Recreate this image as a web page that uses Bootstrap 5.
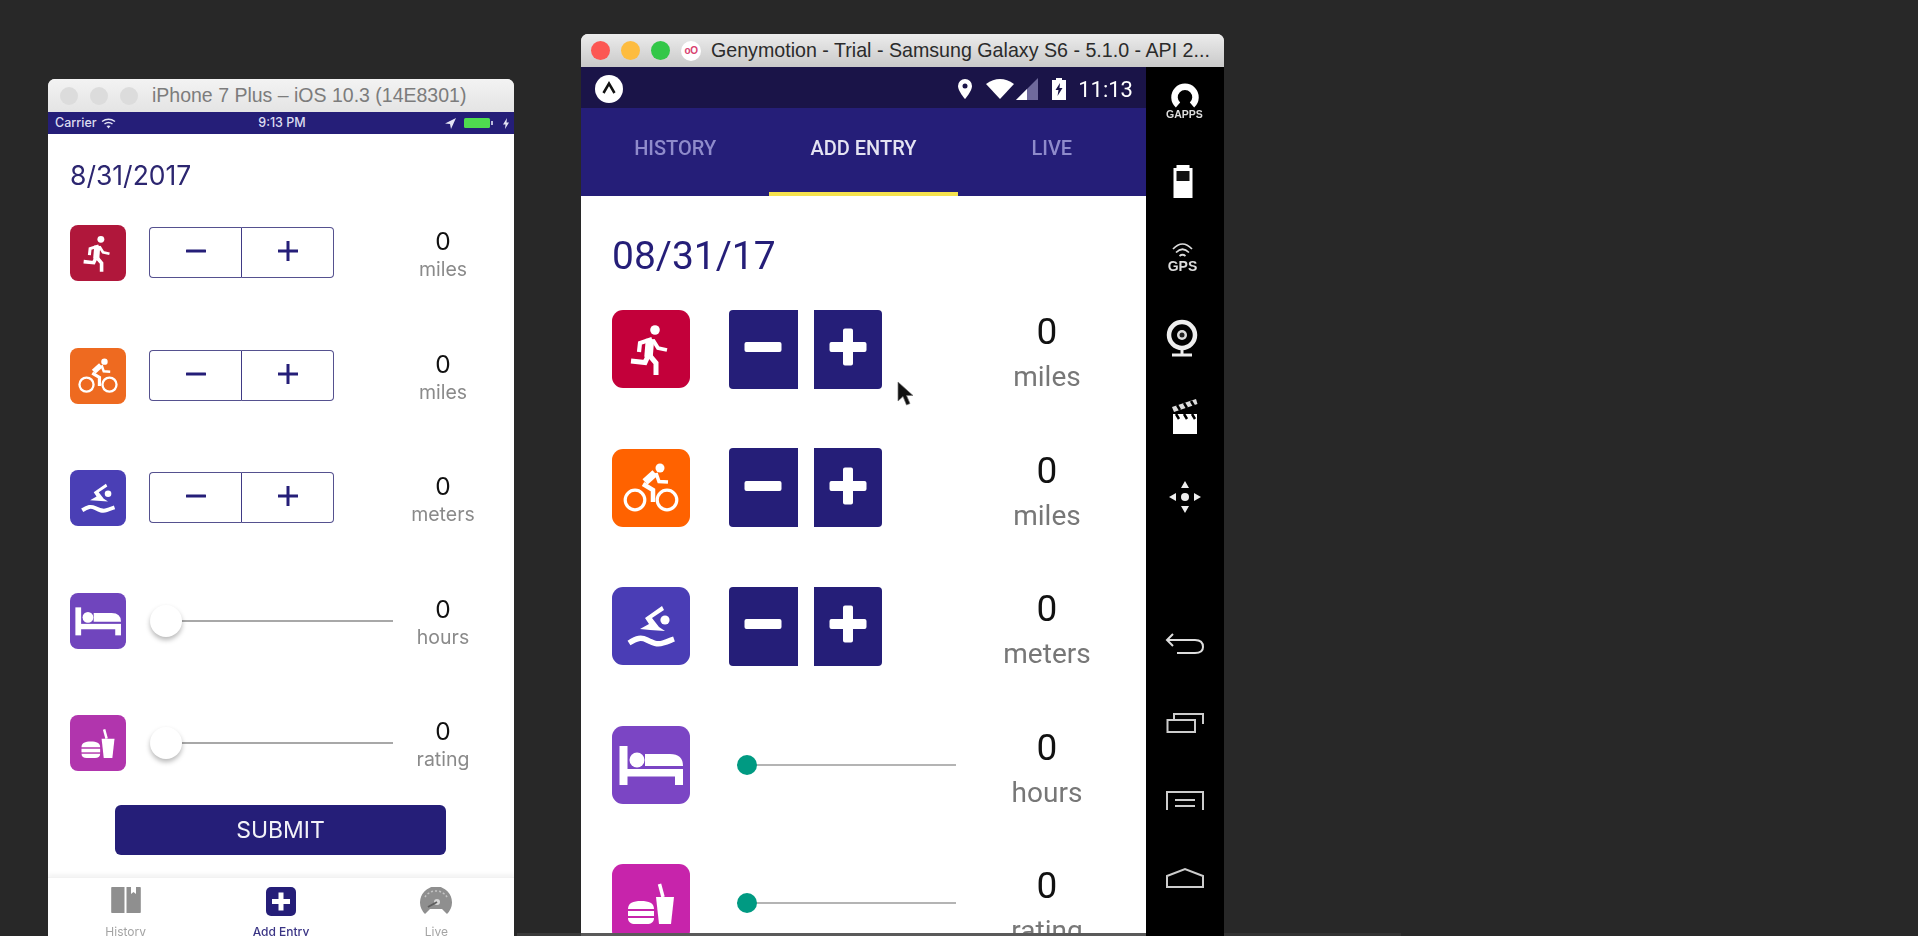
<!DOCTYPE html>
<html lang="en">
<head>
<meta charset="utf-8">
<title>iOS and Android simulators</title>
<link rel="stylesheet" href="https://cdn.jsdelivr.net/npm/bootstrap@5.3.0/dist/css/bootstrap.min.css">
<style>
html,body{height:936px;overflow:hidden}
body{background:#282828;position:relative}
.sim-win{position:absolute;overflow:hidden;border-radius:7px 7px 0 0;bottom:0;display:flex;flex-direction:column;filter:blur(.45px)}
.win-ios{left:48px;top:79px;width:466px;background:#fff;font-family:Inter,"Liberation Sans",sans-serif}
.win-droid{left:581px;top:34px;width:643px;background:#fff;font-family:Roboto,"Liberation Sans",sans-serif}
.title-bar{flex:none;display:flex;align-items:center}
.win-ios .title-bar{height:33px;background:linear-gradient(#f3f3f3,#e4e4e4);padding-left:12px}
.win-droid .title-bar{height:33px;background:linear-gradient(#ececec,#c9c9c9);padding-left:10px}
.light{width:19px;height:19px;border-radius:50%;flex:none;margin-right:11px}
.light-off{background:#dcdcdc;width:18px;height:18px;margin-right:12px}
.light-r{background:#fc5753}.light-y{background:#fdbc40}.light-g{background:#33c748}
.geny-logo{width:20px;height:20px;border-radius:50%;background:#fff;color:#d8416f;font:700 10px/20px "Liberation Sans",sans-serif;text-align:center;flex:none;margin-right:10px;letter-spacing:-.5px}
.win-title{white-space:nowrap}
.win-ios .win-title{font:19.5px "Liberation Sans",sans-serif;color:#7c7c7c;margin-left:2px}
.win-droid .win-title{font:19.65px "Liberation Sans",sans-serif;color:#2b2b2b}
.ios-status{flex:none;height:22px;background:#251e78;color:#dcdcf0;font-size:12.5px;font-weight:500;display:grid;grid-template-columns:1fr auto 1fr;align-items:center;padding:0 5px 0 7px}
.ios-content{flex:1;padding:22px 0 0 22px;min-height:0}
.ios-date{font-size:26.5px;line-height:38px;color:#2c2670;margin-bottom:31px}
.ios-row{display:flex;height:56px;margin-bottom:66.5px}
.ios-row:last-of-type{margin-bottom:34px}
.tile{flex:none;display:block}
.tile svg{display:block;width:100%;height:100%}
.ios-row .tile{width:56px;height:56px;border-radius:8px}
.droid-row .tile{width:78px;height:78px;border-radius:11px}
.c-run-i{background:#b0173b}.c-bike-i{background:#ee6a20}.c-swim-i{background:#4a3fb5}.c-bed-i{background:#7045bd}.c-food-i{background:#b135ad}
.c-run-a{background:#c3003a}.c-bike-a{background:#ff6200}.c-swim-a{background:#4a3db5}.c-bed-a{background:#7b45c4}.c-food-a{background:#c724ab}
.ios-ctl{width:244px;margin-left:23px;flex:none;display:flex;align-items:center}
.ios-stepper{width:185px;height:51px;margin-top:-1px}
.ios-stepper .btn{flex:1;padding:0;border:1.5px solid #55518f;border-radius:4px;background:#fff;color:#251e78;display:flex;align-items:center;justify-content:center}
.ios-stepper .btn:first-child{border-top-right-radius:0;border-bottom-right-radius:0;border-right:2px solid #3f3a85}
.ios-stepper .btn:last-child{border-top-left-radius:0;border-bottom-left-radius:0;border-left:0;margin-left:0}
.ios-stepper svg{width:22px;height:22px;margin-top:-3px}
.val-i{width:100px;flex:none;text-align:center;align-self:flex-start}
.val-i b{display:block;font-weight:400;font-size:24.5px;line-height:32px;color:#111}
.val-i span{display:block;font-size:19.5px;line-height:24px;color:#8a8a8a}
.ios-range,.droid-range{padding:0;margin:0;display:block;background:transparent}
.ios-range{width:243px;margin-left:1px;height:34px}
.ios-range::-webkit-slider-runnable-track{height:2px;background:#a8a8a8;border-radius:0}
.ios-range::-webkit-slider-thumb{width:32px;height:32px;margin-top:-15px;background:#fff;border:0;border-radius:50%;box-shadow:0 3px 5px rgba(0,0,0,.28)}
.droid-range{width:219px;margin-left:8px;height:22px}
.droid-range::-webkit-slider-runnable-track{height:2px;background:#b4b4b4;border-radius:0}
.droid-range::-webkit-slider-thumb{width:20px;height:20px;margin-top:-9px;background:#009a82;border:0;border-radius:50%}
.submit-btn{display:block;width:331px;height:50px;margin-left:45px;padding:0;background:#251e78;border:0;border-radius:6px;color:#f2f2f8;font-size:23px;line-height:50px}
.submit-btn:hover{background:#251e78;color:#f2f2f8}
.ios-tabs{flex:none;height:59px;margin-top:0;border-top:1px solid #f2f2f2;box-shadow:0 -3px 4px #f4f4f4;display:grid;grid-template-columns:repeat(3,1fr);text-align:center;font-size:12px;line-height:16px;color:#a4a4a4;padding-top:9px}
.ios-tabs svg{display:block;margin:0 auto 7px;width:34px;height:30px}
.ios-tabs .on{color:#3b3585;font-weight:500}
.droid-body{flex:1;display:flex;min-height:0}
.droid-main{flex:1;min-width:0;overflow:hidden;display:flex;flex-direction:column}
.droid-status{flex:none;height:41px;background:#1a1448;color:#fff;display:flex;align-items:center;padding:3px 13px 0 14px;font-size:22px}
.expo{width:28px;height:28px;margin-right:auto}
.stat-pin{margin-right:14px}.stat-wifi{margin-right:2px}.stat-sig{margin-right:14px}.stat-bat{margin-right:12px}
.droid-tabs{flex:none;height:88px;background:#251e78;flex-wrap:nowrap}
.droid-tabs .nav-link{height:88px;padding:0 0 6px;line-height:80px;font-size:20px;font-weight:500;color:#8f8bcb;border-bottom:4px solid transparent;border-radius:0}
.droid-tabs .nav-link.active{color:#e4e3f2;border-bottom-color:#f5e24d}
.droid-content{flex:1;padding:38px 0 0 31px;min-height:0;overflow:hidden}
.droid-date{font-size:39px;line-height:44px;color:#251e78;margin-bottom:32px}
.droid-row{display:flex;height:78px;margin-bottom:60.5px}
.droid-ctl{width:298px;margin-left:39px;flex:none;display:flex;align-items:center;gap:16px}
.droid-ctl .btn{width:68.5px;height:79px;padding:0;border:0;background:#251e78;display:flex;align-items:center;justify-content:center}
.droid-ctl .btn svg{width:38px;height:38px;margin-top:-4px}
.droid-ctl .lbtn{border-radius:4px 0 0 4px}.droid-ctl .rbtn{border-radius:0 4px 4px 0}
.droid-ctl .btn:hover{background:#251e78}
.val-a{width:120px;flex:none;text-align:center;align-self:flex-start;margin-left:-40px}
.val-a b{display:block;font-weight:400;font-size:37px;line-height:44px;color:#111}
.val-a span{display:block;font-size:28px;line-height:46px;color:#777}
.side-panel{width:78px;flex:none;background:#000;padding-top:15px;display:flex;flex-direction:column;align-items:center}
.side-panel svg{display:block;width:78px;height:40px}
.side-top{display:flex;flex-direction:column;gap:39px;flex:none}
.side-nav{display:flex;flex-direction:column;gap:38px;margin-top:107px;flex:none}
.side-lbl{font-family:"Liberation Sans",sans-serif;font-weight:700;fill:#ddd}
.mouse{position:absolute;left:897px;top:381px;width:18px;height:27px}
.bottom-strip{position:absolute;left:517px;top:933px;width:884px;height:3px;background:linear-gradient(90deg,#3a3a3a 0 64px,#5a5a5a 64px 629px,#000 629px 707px,#333 707px)}
</style>
</head>
<body>
<svg class="d-none" aria-hidden="true">
  <symbol id="g-run" viewBox="0 0 78 78">
    <circle cx="43" cy="20" r="4.8" fill="#fff"/>
    <g fill="none" stroke="#fff" stroke-linejoin="miter">
      <path d="M38 29 36.500 47" stroke-width="8.500"/>
      <path d="M40 29 28 33 27 42" stroke-width="4.200"/>
      <path d="M41 30 46 38 55 40" stroke-width="3.800"/>
      <path d="M36 46 33 52.500 19 51" stroke-width="5"/>
      <path d="M38 46 44 53 44 65" stroke-width="5"/>
    </g>
  </symbol>
  <symbol id="g-bike" viewBox="0 0 78 78">
    <circle cx="48" cy="19" r="4.500" fill="#fff"/>
    <g fill="none" stroke="#fff">
      <circle cx="23" cy="51" r="9.800" stroke-width="3.200"/>
      <circle cx="55" cy="51" r="9.800" stroke-width="3.200"/>
      <path d="M43 24 33 33" stroke-width="7.500"/>
      <path d="M44 24 47 32.500 56 33" stroke-width="3.500"/>
      <path d="M31 35 41 41 41 53" stroke-width="4.500"/>
    </g>
  </symbol>
  <symbol id="g-swim" viewBox="0 0 78 78">
    <circle cx="53" cy="33" r="4.600" fill="#fff"/>
    <path d="M50 19 52 23 40 31 47 40 53 44 38 43 28 42 37 37 33 31Z" fill="#fff"/>
    <path d="M17 56c8-5 12-6 18-3s10 5 16 3 8-3 11-4" fill="none" stroke="#fff" stroke-width="5.500"/>
  </symbol>
  <symbol id="g-bed" viewBox="0 0 78 78">
    <g fill="#fff">
      <rect x="7.500" y="20" width="8" height="39"/>
      <rect x="15" y="43" width="56" height="7.500"/>
      <rect x="63" y="49" width="8" height="10"/>
      <circle cx="25" cy="34" r="7.500"/>
      <path d="M33 40V28H58Q71 28 71 40Z"/>
    </g>
  </symbol>
  <symbol id="g-food" viewBox="0 0 78 78">
    <g fill="#fff">
      <path d="M44 33H62L59 60H47Z"/>
      <path d="M16 45c0-6 5-8 13-8s13 2 13 8Z"/>
      <rect x="16" y="47" width="26" height="5"/>
      <path d="M16 54H42c0 4-3 6-7 6H23c-4 0-7-2-7-6Z"/>
    </g>
    <path d="M47.500 20 51 33" stroke="#fff" stroke-width="3.500"/>
  </symbol>
  <symbol id="g-minus-t" viewBox="0 0 22 22"><rect x="1" y="9.500" width="20" height="3" rx=".5" fill="currentColor"/></symbol>
  <symbol id="g-plus-t" viewBox="0 0 22 22"><path d="M9.500 1h3v8.500H21v3h-8.500V21h-3v-8.500H1v-3h8.500Z" fill="currentColor"/></symbol>
  <symbol id="g-minus-b" viewBox="0 0 38 38"><rect x=".5" y="14" width="37" height="10" rx="2" fill="#fff"/></symbol>
  <symbol id="g-plus-b" viewBox="0 0 38 38"><path d="M16 .5h6a2 2 0 0 1 2 2V14h11.500a2 2 0 0 1 2 2v6a2 2 0 0 1-2 2H24v11.500a2 2 0 0 1-2 2h-6a2 2 0 0 1-2-2V24H2.500a2 2 0 0 1-2-2v-6a2 2 0 0 1 2-2H14V2.500a2 2 0 0 1 2-2Z" fill="#fff"/></symbol>
</svg>

<section class="sim-win win-ios">
  <div class="title-bar">
    <span class="light light-off"></span><span class="light light-off"></span><span class="light light-off"></span>
    <span class="win-title">iPhone 7 Plus – iOS 10.3 (14E8301)</span>
  </div>
  <div class="ios-status">
    <span class="d-flex align-items-center gap-1">Carrier
      <svg width="15" height="11" viewBox="0 0 15 11" fill="none" stroke="#e4e4f4" stroke-width="1.500"><path d="M1 3.500Q7.500-1 14 3.500M3.500 6Q7.500 3 11.500 6"/><path d="M5.500 8 7.500 10.500 9.500 8Q7.500 6.800 5.500 8Z" fill="#e4e4f4" stroke="none"/></svg>
    </span>
    <span>9:13 PM</span>
    <span class="d-flex align-items-center justify-content-end gap-2">
      <svg width="11" height="11" viewBox="0 0 11 11"><path d="M11 0 0 5.500 5 6 6 11Z" fill="#e4e4f4"/></svg>
      <svg width="31" height="12" viewBox="0 0 31 12"><rect x="0" y="1" width="26" height="10" rx="1.500" fill="#4fdb4f"/><rect x="27" y="4" width="2" height="4" fill="#bcbcdc"/></svg>
      <svg width="6" height="11" viewBox="0 0 6 11" class="ms-n1"><path d="M4 0 0 6.500H2.500L2 11 6 4.500H3.500Z" fill="#e4e4f4"/></svg>
    </span>
  </div>
  <div class="ios-content">
    <div class="ios-date">8/31/2017</div>
    <div class="ios-row">
      <span class="tile c-run-i"><svg><use href="#g-run"/></svg></span>
      <div class="ios-ctl"><div class="btn-group ios-stepper"><button class="btn" type="button" aria-label="minus"><svg><use href="#g-minus-t"/></svg></button><button class="btn" type="button" aria-label="plus"><svg><use href="#g-plus-t"/></svg></button></div></div>
      <div class="val-i"><b>0</b><span>miles</span></div>
    </div>
    <div class="ios-row">
      <span class="tile c-bike-i"><svg><use href="#g-bike"/></svg></span>
      <div class="ios-ctl"><div class="btn-group ios-stepper"><button class="btn" type="button" aria-label="minus"><svg><use href="#g-minus-t"/></svg></button><button class="btn" type="button" aria-label="plus"><svg><use href="#g-plus-t"/></svg></button></div></div>
      <div class="val-i"><b>0</b><span>miles</span></div>
    </div>
    <div class="ios-row">
      <span class="tile c-swim-i"><svg><use href="#g-swim"/></svg></span>
      <div class="ios-ctl"><div class="btn-group ios-stepper"><button class="btn" type="button" aria-label="minus"><svg><use href="#g-minus-t"/></svg></button><button class="btn" type="button" aria-label="plus"><svg><use href="#g-plus-t"/></svg></button></div></div>
      <div class="val-i"><b>0</b><span>meters</span></div>
    </div>
    <div class="ios-row">
      <span class="tile c-bed-i"><svg><use href="#g-bed"/></svg></span>
      <div class="ios-ctl"><input class="form-range ios-range" type="range" min="0" max="24" value="0" aria-label="hours"></div>
      <div class="val-i"><b>0</b><span>hours</span></div>
    </div>
    <div class="ios-row">
      <span class="tile c-food-i"><svg><use href="#g-food"/></svg></span>
      <div class="ios-ctl"><input class="form-range ios-range" type="range" min="0" max="4" value="0" aria-label="rating"></div>
      <div class="val-i"><b>0</b><span>rating</span></div>
    </div>
    <button class="btn submit-btn" type="button">SUBMIT</button>
  </div>
  <div class="ios-tabs">
    <div>
      <svg viewBox="0 0 34 30"><path d="M3 0H15.500V26H3a.8.8 0 0 1-.8-.8V.8A.8.8 0 0 1 3 0ZM17.500 0H22V7L24.500 5 27 7V0H31a.8.8 0 0 1 .8.8V25.200a.8.8 0 0 1-.8.8H17.500Z" fill="#8f8f8f"/></svg>
      History
    </div>
    <div class="on">
      <svg viewBox="0 0 34 30"><rect x="2" y="0" width="30" height="29" rx="5" fill="#251e78"/><path d="M14.500 5.500h5v6.500H26v5h-6.500v6.500h-5V17H8v-5h6.500Z" fill="#fff"/></svg>
      Add Entry
    </div>
    <div>
      <svg viewBox="0 0 34 30"><path d="M6 27A16 16 0 1 1 28 27L23 22H11Z" fill="#8f8f8f"/><path d="M6 10A13 13 0 0 1 28 10" fill="none" stroke="#c4c4c4" stroke-width="1.500" stroke-dasharray="2 2"/><circle cx="18" cy="15" r="3" fill="#d8d8d8"/><path d="M18 15 9 20" stroke="#5e5e5e" stroke-width="2"/></svg>
      Live
    </div>
  </div>
</section>

<section class="sim-win win-droid">
  <div class="title-bar">
    <span class="light light-r"></span><span class="light light-y"></span><span class="light light-g"></span>
    <span class="geny-logo">oO</span>
    <span class="win-title">Genymotion - Trial - Samsung Galaxy S6 - 5.1.0 - API 2...</span>
  </div>
  <div class="droid-body">
    <div class="droid-main">
      <div class="droid-status">
        <svg class="expo" viewBox="0 0 28 28"><circle cx="14" cy="14" r="14" fill="#fff"/><path d="M8.500 18 14 8.500 19.500 18" fill="none" stroke="#111" stroke-width="2.500"/></svg>
        <svg width="14" height="20" viewBox="0 0 14 20" class="stat-pin"><path d="M7 0A7 7 0 0 1 14 7C14 12 7 20 7 20S0 12 0 7A7 7 0 0 1 7 0Z" fill="#fff"/><circle cx="7" cy="7" r="2.500" fill="#1a1448"/></svg>
        <svg width="28" height="20" viewBox="0 0 28 20" class="stat-wifi"><path d="M0 5Q14-5 28 5L14 20Z" fill="#fff"/></svg>
        <svg width="22" height="22" viewBox="0 0 22 22" class="stat-sig"><path d="M22 0V22H0Z" fill="#6f6a9c"/><path d="M11 11V22H0Z" fill="#fff"/></svg>
        <svg width="14" height="22" viewBox="0 0 14 22" class="stat-bat"><path d="M4 0H10V2H14V22H0V2H4Z" fill="#fff"/><path d="M8 5 3.500 12H6.500L5.500 18 10.500 10H7.500Z" fill="#1a1448"/></svg>
        <span>11:13</span>
      </div>
      <nav class="nav nav-justified droid-tabs">
        <a class="nav-link" href="#">HISTORY</a>
        <a class="nav-link active" href="#">ADD ENTRY</a>
        <a class="nav-link" href="#">LIVE</a>
      </nav>
      <div class="droid-content">
        <div class="droid-date">08/31/17</div>
        <div class="droid-row">
          <span class="tile c-run-a"><svg><use href="#g-run"/></svg></span>
          <div class="droid-ctl"><button class="btn lbtn" type="button" aria-label="minus"><svg><use href="#g-minus-b"/></svg></button><button class="btn rbtn" type="button" aria-label="plus"><svg><use href="#g-plus-b"/></svg></button></div>
          <div class="val-a"><b>0</b><span>miles</span></div>
        </div>
        <div class="droid-row">
          <span class="tile c-bike-a"><svg><use href="#g-bike"/></svg></span>
          <div class="droid-ctl"><button class="btn lbtn" type="button" aria-label="minus"><svg><use href="#g-minus-b"/></svg></button><button class="btn rbtn" type="button" aria-label="plus"><svg><use href="#g-plus-b"/></svg></button></div>
          <div class="val-a"><b>0</b><span>miles</span></div>
        </div>
        <div class="droid-row">
          <span class="tile c-swim-a"><svg><use href="#g-swim"/></svg></span>
          <div class="droid-ctl"><button class="btn lbtn" type="button" aria-label="minus"><svg><use href="#g-minus-b"/></svg></button><button class="btn rbtn" type="button" aria-label="plus"><svg><use href="#g-plus-b"/></svg></button></div>
          <div class="val-a"><b>0</b><span>meters</span></div>
        </div>
        <div class="droid-row">
          <span class="tile c-bed-a"><svg><use href="#g-bed"/></svg></span>
          <div class="droid-ctl"><input class="form-range droid-range" type="range" min="0" max="24" value="0" aria-label="hours"></div>
          <div class="val-a"><b>0</b><span>hours</span></div>
        </div>
        <div class="droid-row">
          <span class="tile c-food-a"><svg><use href="#g-food"/></svg></span>
          <div class="droid-ctl"><input class="form-range droid-range" type="range" min="0" max="4" value="0" aria-label="rating"></div>
          <div class="val-a"><b>0</b><span>rating</span></div>
        </div>
      </div>
    </div>
    <aside class="side-panel">
      <div class="side-top">
        <svg viewBox="0 0 78 40"><path d="M32 23A10.500 10.500 0 1 1 46 23" fill="none" stroke="#fff" stroke-width="6.500"/><text class="side-lbl" x="38.500" y="36" font-size="10.500" text-anchor="middle">GAPPS</text></svg>
        <svg viewBox="0 0 78 40"><path d="M30.500 4H43.500V7H46.500V37H27.500V7H30.500Z" fill="#fff"/><rect x="30.500" y="10" width="13" height="10" fill="#111"/></svg>
        <svg viewBox="0 0 78 40"><g fill="none" stroke="#ddd" stroke-width="1.700"><path d="M27 9Q36.500-1 46 9"/><path d="M30 12.500Q36.500 6 43 12.500"/><path d="M33.500 16Q36.500 13.500 39.500 16"/></g><text class="side-lbl" x="36.500" y="31" font-size="14" text-anchor="middle">GPS</text></svg>
        <svg viewBox="0 0 78 40"><circle cx="36" cy="16" r="13" fill="none" stroke="#eee" stroke-width="4.500"/><circle cx="36" cy="16" r="5" fill="#ddd"/><circle cx="36" cy="16" r="2.500" fill="#222"/><path d="M36 28V35M26 36H46" stroke="#eee" stroke-width="3"/></svg>
        <svg viewBox="0 0 78 40"><path d="M27 16H51V36H27Z" fill="#fff"/><path d="M26 9 50 1 51.500 6 28 14Z" fill="#ddd"/><path d="M31 7 34 12M38 5 41 10M45 3 48 8" stroke="#000" stroke-width="2.500"/><path d="M30 16 33 21M38 16 41 21M46 16 49 21" stroke="#000" stroke-width="2.500"/></svg>
        <svg viewBox="0 0 78 40"><g fill="#eee"><circle cx="39" cy="20" r="4"/><path d="M39 4 43 11H35ZM39 36 35 29H43ZM23 20 30 16V24ZM55 20 48 24V16Z"/></g></svg>
      </div>
      <div class="side-nav">
        <svg viewBox="0 0 78 40"><path d="M21 16H49Q57 16 57 23Q57 29 49 29H31M27 10 21 16 27 22" fill="none" stroke="#ddd" stroke-width="2"/></svg>
        <svg viewBox="0 0 78 40"><path d="M21.500 18H49V30H21.500ZM28 17V12H57V22" fill="none" stroke="#ccc" stroke-width="2"/></svg>
        <svg viewBox="0 0 78 40"><path d="M21 30V12H57V30M29 20H49M29 26H49" fill="none" stroke="#ccc" stroke-width="2"/></svg>
        <svg viewBox="0 0 78 40"><path d="M21 18 39 11 57 18V29H21Z" fill="none" stroke="#ccc" stroke-width="2"/></svg>
      </div>
    </aside>
  </div>
</section>

<svg class="mouse" viewBox="0 0 18 27" aria-hidden="true"><path d="M1 1V20L6 15.500 9.500 24 13 22.500 9.500 14.500H16Z" fill="#111" stroke="#777" stroke-width=".7"/></svg>
<div class="bottom-strip"></div>
<script src="https://cdn.jsdelivr.net/npm/bootstrap@5.3.0/dist/js/bootstrap.bundle.min.js"></script>
</body>
</html>
